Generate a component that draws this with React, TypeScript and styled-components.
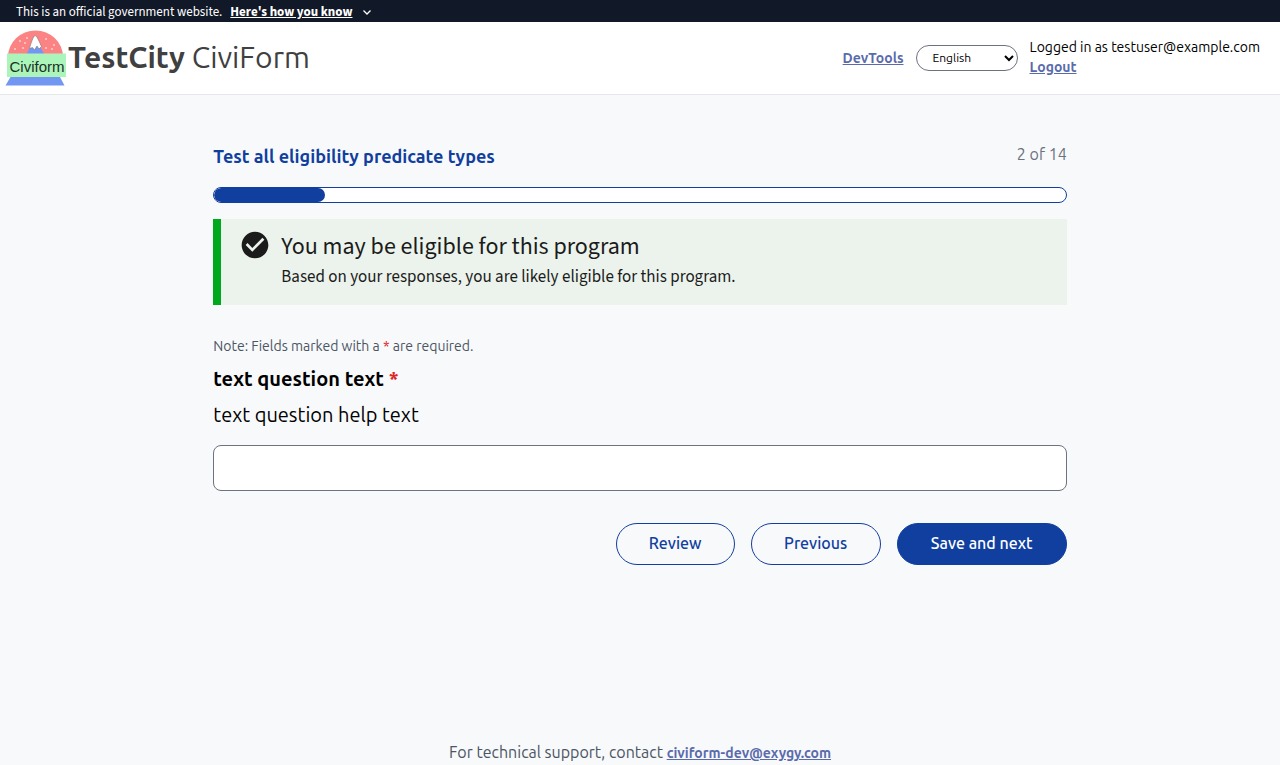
import React from "react";
import styled, { createGlobalStyle } from "styled-components";

const bodyFont = `Ubuntu, "Noto Sans", "Open Sans", sans-serif`;
const noticeFont = `"Source Sans 3", "Source Sans Pro", "Noto Sans CJK SC", "Noto Sans", sans-serif`;
const blue = "#113f9f";
const linkBlue = "#5a6bab";

const GlobalStyle = createGlobalStyle`
  *, *::before, *::after { box-sizing: border-box; }
  body { margin: 0; background: #f8f9fb; color: #000; font-family: ${bodyFont}; font-weight: 400; font-size: 14px; line-height: 20px; }
  h1, h2, h3, p { margin: 0; font: inherit; }
`;

const Page = styled.div`
  min-height: 100vh;
  display: flex;
  flex-direction: column;
`;

const Banner = styled.div`
  display: flex;
  align-items: center;
  gap: 8px;
  height: 22px;
  padding: 1px 16px 0;
  background: #111827;
  color: #fff;
  font-family: ${noticeFont};
  font-size: 13px;
  font-weight: 400;
`;

const BannerButton = styled.button`
  display: flex;
  align-items: center;
  gap: 10px;
  padding: 0;
  border: 0;
  background: none;
  color: inherit;
  font: inherit;
  font-weight: 700;
  span { text-decoration: underline; }
`;

const Header = styled.header`
  display: flex;
  align-items: center;
  justify-content: space-between;
  height: 73px;
  padding: 0 20px 0 4px;
  background: #fff;
  border-bottom: 1px solid #e5e7eb;
`;

const Brand = styled.a`
  display: flex;
  align-items: center;
  color: #404040;
  text-decoration: none;
  font-size: 30px;
  line-height: 36px;
  b { font-weight: 700; }
`;

const BrandName = styled.span`
  padding-bottom: 2px;
`;

const Account = styled.div`
  display: flex;
  align-items: center;
  gap: 12px;
  font-size: 14px;
`;

const Session = styled.div`
  padding-bottom: 2px;
`;

const Link = styled.a`
  color: ${linkBlue};
  font-size: 14px;
  font-weight: 600;
  text-decoration: underline;
`;

const Language = styled.select`
  width: 102px;
  height: 26px;
  padding: 0 0 2px 12px;
  border: 1px solid #6b7280;
  border-radius: 13px;
  background: #fff;
  color: #000;
  font-family: inherit;
  font-size: 12px;
  font-weight: 400;
`;

const Main = styled.main`
  flex: 1;
  width: 66.67%;
  margin: 0 auto;
  padding-top: 47px;
`;

const TitleRow = styled.div`
  display: flex;
  justify-content: space-between;
  margin-bottom: 17px;
`;

const ProgramTitle = styled.h1`
  color: ${blue};
  font-size: 18px;
  font-weight: 600;
  line-height: 28px;
`;

const StepCount = styled.span`
  color: #6b7280;
  font-size: 16px;
  line-height: 24px;
`;

const Track = styled.div`
  height: 16px;
  border: 1px solid ${blue};
  border-radius: 8px;
  background: #fff;
  overflow: hidden;
`;

const Fill = styled.div`
  height: 100%;
  border-radius: 8px;
  background: ${blue};
`;

const Alert = styled.section`
  display: flex;
  gap: 10px;
  margin-top: 16px;
  padding: 10px 20px 12px 18px;
  min-height: 86px;
  border-left: 8px solid #00a91c;
  background: #ecf3ec;
  color: #1b1b1b;
  font-family: ${noticeFont};
  font-weight: 400;
`;

const AlertBody = styled.div`
  padding-top: 2px;
`;

const AlertTitle = styled.h2`
  font-size: 24px;
  line-height: 32px;
`;

const AlertText = styled.p`
  font-size: 17px;
  line-height: 28px;
`;

const Note = styled.p`
  margin-top: 31px;
  color: #4b5563;
  font-size: 14px;
`;

const Star = styled.span`
  color: #dc2626;
`;

const Question = styled.label`
  display: block;
  margin-top: 9px;
  font-size: 20px;
  font-weight: 600;
  line-height: 28px;
`;

const Help = styled.p`
  margin-top: 8px;
  font-size: 20px;
  line-height: 28px;
`;

const Field = styled.input`
  display: block;
  width: 100%;
  height: 46px;
  margin-top: 16px;
  padding: 0 12px;
  border: 1px solid #6b7280;
  border-radius: 8px;
  background: #fff;
  font: inherit;
`;

const Actions = styled.div`
  display: flex;
  justify-content: flex-end;
  gap: 16px;
  margin-top: 32px;
`;

const Action = styled.button<{ $primary?: boolean; $width: number }>`
  min-width: ${(p) => p.$width}px;
  height: 42px;
  padding: 0 24px 2px;
  border: 1px solid ${blue};
  border-radius: 21px;
  background: ${(p) => (p.$primary ? blue : "transparent")};
  color: ${(p) => (p.$primary ? "#fff" : blue)};
  font-family: inherit;
  font-size: 16px;
  font-weight: 500;
`;

const Footer = styled.footer`
  color: #4b5563;
  font-size: 16px;
  line-height: 24px;
  text-align: center;
`;

const Logo = () => (
  <svg width="64" height="60" viewBox="0 0 64 60" aria-hidden="true">
    <path d="M4 31V29a27.500 26.500 0 0 1 55 0v2z" fill="#fb8383" />
    <path d="M20 31 31 10l12 21z" fill="#7297f2" />
    <path d="M31 7.500c2 0 5 8 6.500 11l-2.500 2.500-2-3-2.500 4-2-2.500-3 1c1-4 4-13 5.500-13z" fill="#fff" stroke="#777" strokeWidth=".6" />
    <g fill="#ffd0d0">
      <circle cx="16" cy="13" r="1" /><circle cx="23" cy="10" r="1" /><circle cx="21" cy="15" r="1" />
      <circle cx="11" cy="21" r="1" /><circle cx="19" cy="20" r="1" /><circle cx="42" cy="11" r="1" />
      <circle cx="50" cy="17" r="1" /><circle cx="42" cy="20" r="1" /><circle cx="48" cy="21" r="1" />
    </g>
    <path d="M6.500 49H56l4.500 8.500H1.500z" fill="#7297f2" />
    <path d="M3 25.500h59V49H3z" fill="#abf5bb" />
    <text x="33" y="43.500" textAnchor="middle" fontFamily="Liberation Sans, sans-serif" fontSize="15" fontWeight="400" fill="#1c3024">Civiform</text>
  </svg>
);

const Progress = ({ percent }: { percent: number }) => (
  <Track role="progressbar" aria-valuenow={percent} aria-label="Application progress">
    <Fill style={{ width: `${percent}%` }} />
  </Track>
);

export default function App() {
  return (
    <Page>
      <GlobalStyle />
      <Banner>
        This is an official government website.
        <BannerButton type="button">
          <span>Here's how you know</span>
          <svg width="10" height="10" viewBox="0 0 10 10" fill="none" stroke="currentColor" strokeWidth="1.300">
            <path d="m1.500 3.500 3.500 3.500 3.500-3.500" />
          </svg>
        </BannerButton>
      </Banner>
      <Header>
        <Brand href="#"><Logo /><BrandName><b>TestCity</b> CiviForm</BrandName></Brand>
        <Account>
          <Link href="#">DevTools</Link>
          <Language aria-label="Language" defaultValue="English"><option>English</option></Language>
          <Session>
            <div>Logged in as testuser@example.com</div>
            <Link href="#">Logout</Link>
          </Session>
        </Account>
      </Header>
      <Main>
        <TitleRow>
          <ProgramTitle>Test all eligibility predicate types</ProgramTitle>
          <StepCount>2 of 14</StepCount>
        </TitleRow>
        <Progress percent={13} />
        <Alert>
          <svg width="32" height="32" viewBox="0 0 24 24" fill="#1b1b1b" aria-hidden="true">
            <path d="M12 2C6.480 2 2 6.480 2 12s4.480 10 10 10 10-4.480 10-10S17.520 2 12 2zm-2 15-5-5 1.410-1.410L10 14.170l7.590-7.590L19 8l-9 9z" />
          </svg>
          <AlertBody>
            <AlertTitle>You may be eligible for this program</AlertTitle>
            <AlertText>Based on your responses, you are likely eligible for this program.</AlertText>
          </AlertBody>
        </Alert>
        <Note>Note: Fields marked with a <Star>*</Star> are required.</Note>
        <Question htmlFor="answer">text question text <Star>*</Star></Question>
        <Help id="answer-help">text question help text</Help>
        <Field id="answer" type="text" aria-describedby="answer-help" required />
        <Actions>
          <Action type="button" $width={119}>Review</Action>
          <Action type="button" $width={130}>Previous</Action>
          <Action type="submit" $primary $width={170}>Save and next</Action>
        </Actions>
      </Main>
      <Footer>For technical support, contact <Link href="mailto:civiform-dev@exygy.com">civiform-dev@exygy.com</Link></Footer>
    </Page>
  );
}
